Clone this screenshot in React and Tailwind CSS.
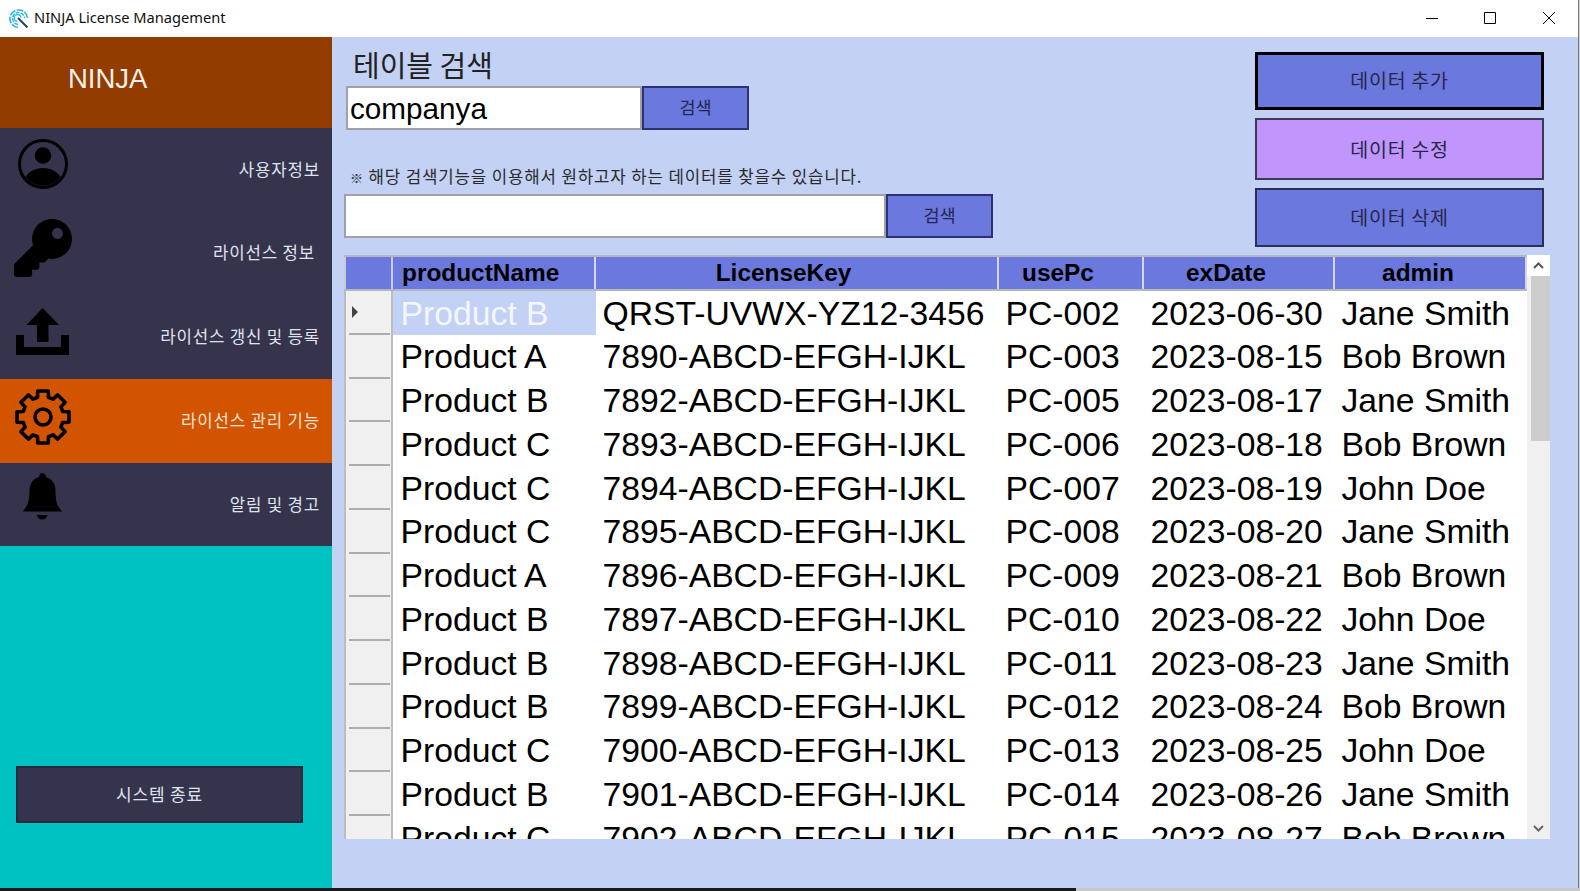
import { FaKey } from "react-icons/fa";

const KR = "font-['Noto_Sans_CJK_KR','Noto_Sans',sans-serif]";

const COLUMNS = [
  { name: "productName", width: "w-[203px]", align: "pl-[9px]" },
  { name: "LicenseKey", width: "w-[403px]", align: "justify-center pr-[26px]" },
  { name: "usePc", width: "w-[145px]", align: "justify-center pr-[25px]" },
  { name: "exDate", width: "w-[191px]", align: "justify-center pr-[25px]" },
  { name: "admin", width: "w-[192px]", align: "justify-center pr-[24px]" },
];

const ROWS = [
  ["Product B", "QRST-UVWX-YZ12-3456", "PC-002", "2023-06-30", "Jane Smith"],
  ["Product A", "7890-ABCD-EFGH-IJKL", "PC-003", "2023-08-15", "Bob Brown"],
  ["Product B", "7892-ABCD-EFGH-IJKL", "PC-005", "2023-08-17", "Jane Smith"],
  ["Product C", "7893-ABCD-EFGH-IJKL", "PC-006", "2023-08-18", "Bob Brown"],
  ["Product C", "7894-ABCD-EFGH-IJKL", "PC-007", "2023-08-19", "John Doe"],
  ["Product C", "7895-ABCD-EFGH-IJKL", "PC-008", "2023-08-20", "Jane Smith"],
  ["Product A", "7896-ABCD-EFGH-IJKL", "PC-009", "2023-08-21", "Bob Brown"],
  ["Product B", "7897-ABCD-EFGH-IJKL", "PC-010", "2023-08-22", "John Doe"],
  ["Product B", "7898-ABCD-EFGH-IJKL", "PC-011", "2023-08-23", "Jane Smith"],
  ["Product B", "7899-ABCD-EFGH-IJKL", "PC-012", "2023-08-24", "Bob Brown"],
  ["Product C", "7900-ABCD-EFGH-IJKL", "PC-013", "2023-08-25", "John Doe"],
  ["Product B", "7901-ABCD-EFGH-IJKL", "PC-014", "2023-08-26", "Jane Smith"],
  ["Product C", "7902-ABCD-EFGH-IJKL", "PC-015", "2023-08-27", "Bob Brown"],
];

// 8 toothed gear outline, easier to compute than to write by hand
function gearPath(cx, cy, outer, inner) {
  const pts = [];
  for (let i = 0; i < 8; i++) {
    const a = (i * Math.PI) / 4 - Math.PI / 2;
    [
      [inner, -0.27],
      [outer, -0.2],
      [outer, 0.2],
      [inner, 0.27],
    ].forEach(([r, d]) => {
      pts.push(`${(cx + r * Math.cos(a + d)).toFixed(2)} ${(cy + r * Math.sin(a + d)).toFixed(2)}`);
    });
  }
  return "M" + pts.join("L") + "Z";
}

function UserIcon() {
  return (
    <svg width="50" height="50" viewBox="0 0 50 50">
      <circle cx="25" cy="25" r="23.5" fill="none" stroke="#000" strokeWidth="3" />
      <circle cx="25" cy="16.5" r="8.3" fill="#000" />
      <path d="M7.5 38C11 32.5 17 29 25 29s14 3.5 17.5 9A22 22 0 0 1 7.5 38Z" fill="#000" />
    </svg>
  );
}

function UploadIcon() {
  return (
    <svg width="53" height="47" viewBox="0 0 53 47">
      <path d="M26.6 0 43 17H32.5V34H21V17H10.5Z" fill="#000" />
      <path d="M0 27H8V39H45V27H53V47H0Z" fill="#000" />
    </svg>
  );
}

function GearIcon() {
  return (
    <svg width="58" height="58" viewBox="0 0 58 58">
      <path d={gearPath(29, 29, 26.5, 20.5)} fill="none" stroke="#000" strokeWidth="3.6" strokeLinejoin="round" />
      <circle cx="29" cy="29" r="8" fill="none" stroke="#000" strokeWidth="3.6" />
    </svg>
  );
}

function BellIcon() {
  return (
    <svg width="39" height="47" viewBox="0 0 39 47">
      <path
        d="M19.5 0c2.2 0 3.4 1.6 3.3 4 6.300 1.600 9.700 7 9.700 13.500 0 7 1 13.500 2.500 15.500L39 38.500H0L3.500 33C5 31 6.500 24.500 6.500 17.500 6.500 11 10 5.600 16.200 4 16.100 1.600 17.300 0 19.500 0Z"
        fill="#000"
      />
      <path d="M14 42H24.500C24 45 22 46.500 19.200 46.500S14.500 45 14 42Z" fill="#000" />
    </svg>
  );
}

function AppLogo() {
  return (
    <svg width="20" height="20" viewBox="0 0 20 20" fill="none">
      <path d="M9 18.500A8.800 8.800 0 1 1 18.500 9" stroke="#29b8e6" strokeWidth="1.600" strokeDasharray="7 1.200" />
      <path d="M9 15.500A6 6 0 1 1 15.500 9" stroke="#29b8e6" strokeWidth="1.400" strokeDasharray="4 1" />
      <path d="M8.500 12.500A3.400 3.400 0 1 1 12 8.500" stroke="#29b8e6" strokeWidth="1.300" />
      <path d="M9 9 18.500 18.500" stroke="#1d3f6e" strokeWidth="2" />
    </svg>
  );
}

function NavItem({ icon, iconClass, label, textClass, active }) {
  return (
    <div className={`relative flex h-[83.700px] items-center justify-end pb-[1px] ${active ? "bg-[#d25400]" : "bg-[#35344c]"} ${textClass}`}>
      <div className={`absolute ${iconClass}`}>{icon}</div>
      <span className={`${KR} text-[16.800px] tracking-[0.8px] ${active ? "text-[#f7e3d3]" : "text-[#dfe3ee]"}`}>{label}</span>
    </div>
  );
}

function SearchRow({ value, inputWidth, className }) {
  return (
    <div className={`flex h-[44px] ${className}`}>
      <div className={`${inputWidth} flex items-center border-2 border-[#a0a0a8] bg-white pl-[2px] pt-[3px] font-['Liberation_Sans',sans-serif] text-[29.700px] text-black`}>
        {value}
      </div>
      <button className={`${KR} h-full w-[107px] border-2 border-[#2c3170] bg-[#6b78de] pb-[1px] text-[17.500px] text-[#23264f]`}>검색</button>
    </div>
  );
}

function ActionButton({ label, className }) {
  return (
    <button className={`${KR} w-[289px] bg-[#6b78de] text-[19.500px] tracking-[0.7px] text-[#26264a] ${className}`}>{label}</button>
  );
}

export default function App() {
  return (
    <div className="flex h-[891px] w-[1580px] flex-col overflow-hidden bg-[#d4d4d4]">
      <div className="flex h-[888px] w-[1579px] flex-col border-r border-[#777] bg-white">
        {/* title bar */}
        <div className="flex h-[37px] shrink-0 items-center bg-white pl-[9px]">
          <AppLogo />
          <span className="ml-[5px] pb-[2px] font-['Noto_Sans',sans-serif] text-[14.650px] text-[#111]">NINJA License Management</span>
          <div className="ml-auto flex items-center pb-[1px] text-black">
            <div className="flex w-[58px] justify-center pr-[2px]">
              <svg width="12" height="12" viewBox="0 0 12 12"><path d="M0 6.500H12" stroke="#000" /></svg>
            </div>
            <div className="flex w-[58px] justify-center pr-[2px]">
              <svg width="12" height="12" viewBox="0 0 12 12"><path d="M.5.500H11.500V11.500H.5Z" fill="none" stroke="#000" /></svg>
            </div>
            <div className="flex w-[58px] justify-center">
              <svg width="12" height="12" viewBox="0 0 12 12"><path d="M0 0 12 12M12 0 0 12" stroke="#000" /></svg>
            </div>
          </div>
        </div>

        <div className="flex min-h-0 flex-1">
          {/* sidebar */}
          <div className="flex w-[332px] shrink-0 flex-col">
            <div className="flex h-[91px] shrink-0 items-center bg-[#933c00] pb-[8px] pl-[68px] font-['Liberation_Sans',sans-serif] text-[27.500px] text-[#f6f1ec]">
              NINJA
            </div>
            <NavItem icon={<UserIcon />} iconClass="left-[18px] top-[11px]" label="사용자정보" textClass="pr-[12px]" />
            <NavItem icon={<FaKey size={58} color="#000" />} iconClass="left-[14px] top-[7px]" label="라이선스 정보" textClass="pr-[17px]" />
            <NavItem icon={<UploadIcon />} iconClass="left-[16px] top-[13px]" label="라이선스 갱신 및 등록" textClass="pr-[12px]" />
            <NavItem icon={<GearIcon />} iconClass="left-[14px] top-[9px]" label="라이선스 관리 기능" textClass="pr-[12px]" active />
            <NavItem icon={<BellIcon />} iconClass="left-[23px] top-[10px]" label="알림 및 경고" textClass="pr-[12px]" />
            <div className="flex-1 bg-[#00c2c2] pl-[16px] pt-[220px]">
              <button className={`${KR} h-[57px] w-[287px] border-2 border-[#1f2a3d] bg-[#35344c] pb-[2px] text-[17px] tracking-[0.8px] text-[#dfe3ee]`}>
                시스템 종료
              </button>
            </div>
          </div>

          {/* main */}
          <div className="min-w-0 flex-1 bg-[#c3d1f5] pl-[12px]">
            <div className="flex h-[218px] items-start">
              <div className="flex-1">
                <div className={`${KR} h-[49px] pl-[9px] pt-[5px] text-[29px] leading-[44px] text-[#222]`}>테이블 검색</div>
                <SearchRow value="companya" inputWidth="w-[296px]" className="ml-[2px]" />
                <div className={`${KR} mt-[34px] h-[30px] pl-[6px] text-[16.800px] leading-[24px] tracking-[0.85px] text-[#2a2a2a]`}>
                  <span className="text-[13px]">※</span> 해당 검색기능을 이용해서 원하고자 하는 데이터를 찾을수 있습니다.
                </div>
                <SearchRow value="" inputWidth="w-[542px]" />
              </div>
              <div className="mr-[34px] flex flex-col gap-[8px] pt-[15px]">
                <ActionButton label="데이터 추가" className="h-[58px] border-[3px] border-black pb-[3px]" />
                <ActionButton label="데이터 수정" className="h-[62px] border-2 border-[#3a3a55] !bg-[#c096fc]" />
                <ActionButton label="데이터 삭제" className="h-[59px] border-2 border-[#2c2f55] pb-[2px]" />
              </div>
            </div>

            {/* grid */}
            <div className="flex h-[584px] w-[1206px] overflow-hidden bg-white font-['Liberation_Sans',sans-serif]">
              <div className="w-[1183px] shrink-0">
                <div className="flex h-[36px] border-y-2 border-[#b4b6c0] bg-[#6b78de]">
                  <div className="w-[49px] shrink-0 border-x-2 border-[#c9cbd6]" />
                  {COLUMNS.map((c) => (
                    <div
                      key={c.name}
                      className={`flex ${c.width} shrink-0 items-center border-r-2 border-[#d3d6e6] ${c.align} text-[24.400px] font-bold text-black`}
                    >
                      {c.name}
                    </div>
                  ))}
                </div>
                {ROWS.map((row, i) => (
                  <div key={row[1]} className="flex h-[43.750px] text-[33.700px] text-black">
                    <div className="relative w-[49px] shrink-0 border-x-2 border-x-[#bdbdbd] bg-[#f0f0f0]">
                      <div className="absolute bottom-0 left-[3px] right-[1px] h-[2px] bg-[#adadad]" />
                      {i === 0 && (
                        <div className="absolute left-[6px] top-[15px] h-0 w-0 border-y-[6px] border-l-[6px] border-y-transparent border-l-[#444]" />
                      )}
                    </div>
                    {row.map((cell, j) => (
                      <div
                        key={j}
                        className={`flex ${COLUMNS[j].width} shrink-0 items-center whitespace-nowrap ${j === 0 ? "pl-[7.500px]" : "pl-[6.500px]"} ${i === 0 && j === 0 ? "bg-[#c3d1f5] text-[#f4f6fd]" : ""}`}
                      >
                        {cell}
                      </div>
                    ))}
                  </div>
                ))}
              </div>

              {/* scrollbar */}
              <div className="flex h-full w-[23px] flex-col items-center bg-[#f0f0f0]">
                <div className="flex h-[21px] w-full items-center justify-center bg-white">
                  <svg width="11" height="7" viewBox="0 0 11 7"><path d="M1 6 5.500 1.500 10 6" fill="none" stroke="#555" strokeWidth="2" /></svg>
                </div>
                <div className="ml-[3px] h-[165px] w-[19px] bg-[#cdcdcd]" />
                <div className="mt-auto flex h-[21px] w-full items-center justify-center">
                  <svg width="11" height="7" viewBox="0 0 11 7"><path d="M1 1 5.500 5.500 10 1" fill="none" stroke="#666" strokeWidth="2" /></svg>
                </div>
              </div>
            </div>
          </div>
        </div>
      </div>

      {/* taskbar sliver */}
      <div className="flex h-[3px] shrink-0">
        <div className="w-[1076px] bg-[#1a1a1a]" />
        <div className="flex-1 bg-[#c8c8c8]" />
      </div>
    </div>
  );
}
